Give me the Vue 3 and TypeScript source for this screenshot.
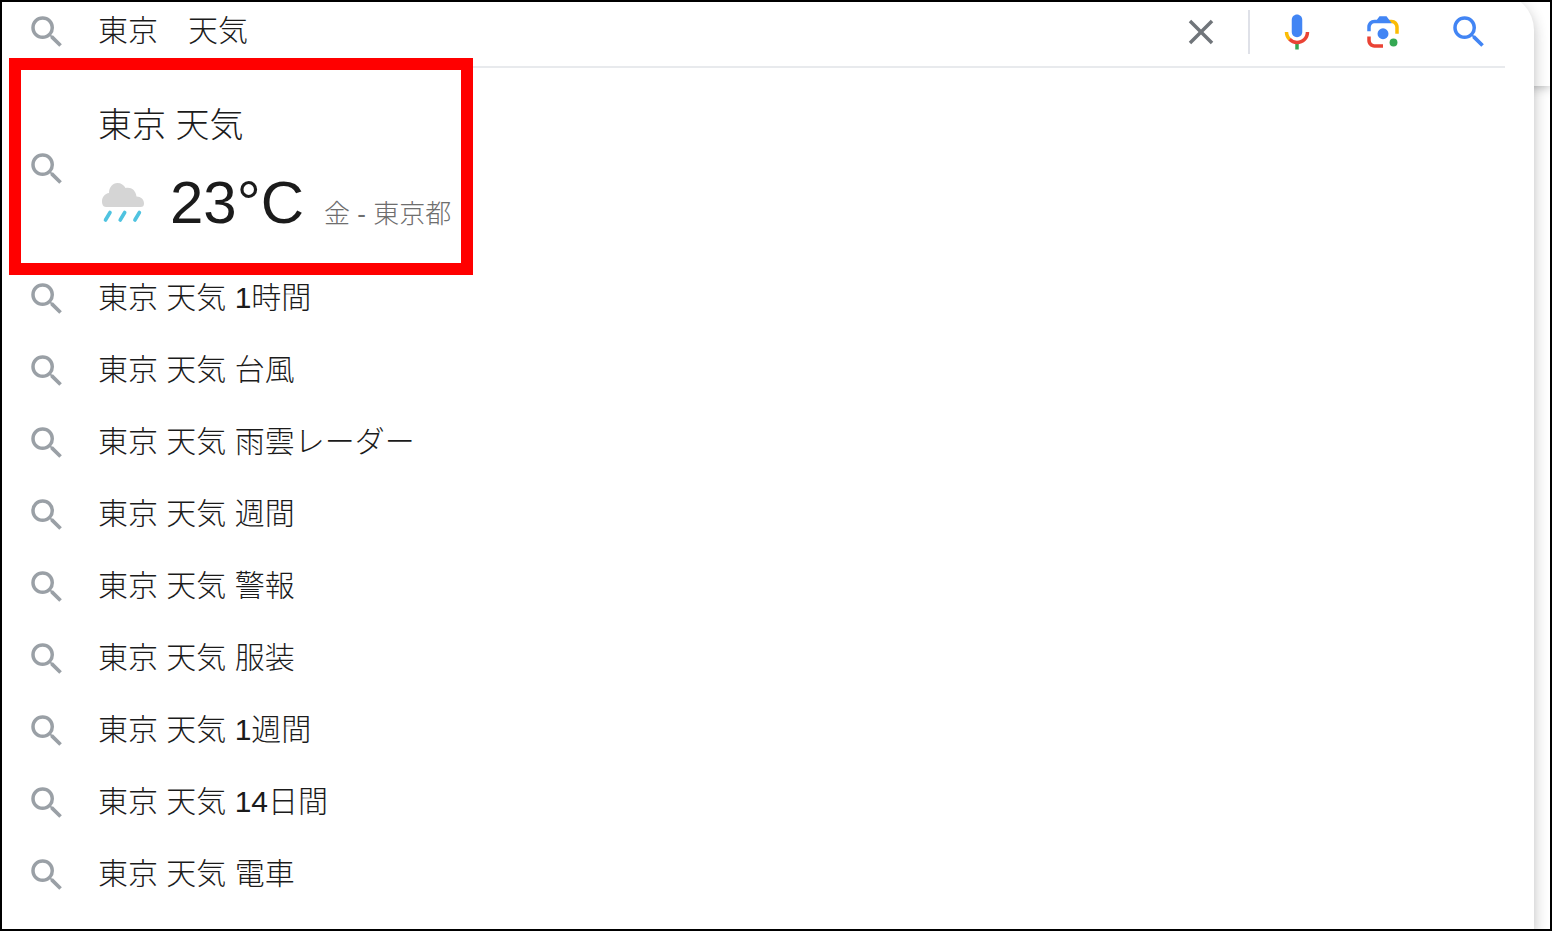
<script setup lang="ts">
import { ref } from 'vue'

const query = ref('東京　天気')

const magnifier =
  'M15.5 14h-.79l-.28-.27A6.471 6.471 0 0 0 16 9.5 6.5 6.5 0 1 0 9.5 16c1.61 0 3.09-.59 4.23-1.57l.27.28v.79l5 4.99L20.49 19l-4.99-5zm-6 0C7.01 14 5 11.99 5 9.5S7.01 5 9.5 5 14 7.01 14 9.5 11.99 14 9.5 14z'

const suggestions: string[] = [
  '東京 天気 1時間',
  '東京 天気 台風',
  '東京 天気 雨雲レーダー',
  '東京 天気 週間',
  '東京 天気 警報',
  '東京 天気 服装',
  '東京 天気 1週間',
  '東京 天気 14日間',
  '東京 天気 電車',
]
</script>

<template>
  <div class="frame">
    <div class="page-header"></div>
    <main class="panel">
      <form class="search-bar" role="search" @submit.prevent>
        <svg class="icon muted" viewBox="0 0 24 24" aria-hidden="true"><path :d="magnifier" /></svg>
        <input v-model="query" class="query" type="text" aria-label="検索" autocomplete="off" />
        <button class="tool clear" type="button" aria-label="クリア" @click="query = ''">
          <svg class="icon close" viewBox="0 0 24 24" aria-hidden="true">
            <path d="M19 6.41L17.59 5 12 10.59 6.41 5 5 6.41 10.59 12 5 17.59 6.41 19 12 13.41 17.59 19 19 17.59 13.41 12z" />
          </svg>
        </button>
        <span class="separator"></span>
        <button class="tool" type="button" aria-label="音声で検索">
          <svg class="icon" viewBox="0 0 24 24" aria-hidden="true">
            <path fill="#4285f4" d="m12 15c1.66 0 3-1.31 3-2.97v-7.02c0-1.66-1.34-3.01-3-3.01s-3 1.34-3 3.01v7.02c0 1.66 1.34 2.97 3 2.97z" />
            <path fill="#34a853" d="m11 18.08h2v3.92h-2z" />
            <path fill="#fbbc04" d="m7.05 16.87c-1.27-1.33-2.05-2.83-2.05-4.87h2c0 1.45 0.56 2.42 1.47 3.38v0.32l-1.15 1.18z" />
            <path fill="#ea4335" d="m12 16.93a4.97 5.25 0 0 1 -3.54 -1.55l-1.41 1.49c1.26 1.34 3.02 2.13 4.95 2.13 3.87 0 6.99-2.92 6.99-7h-1.99c0 2.92-2.24 4.93-5 4.93z" />
          </svg>
        </button>
        <button class="tool" type="button" aria-label="画像で検索">
          <svg class="icon" viewBox="0 0 192 192" aria-hidden="true">
            <circle fill="#34a853" cx="144.07" cy="144" r="18" />
            <circle fill="#4285f4" cx="96.07" cy="104" r="25" />
            <path fill="#ea4335" d="M24 135.2c0 18.11 14.69 32.8 32.8 32.8H96v-16l-40.1-.1c-8.8 0-15.9-8.19-15.9-17.9v-18H24z" />
            <path fill="#fbbc04" d="M168 72.8c0-18.11-14.69-32.8-32.8-32.8H116l20 16c8.8 0 16 8.29 16 18v30h16z" />
            <path fill="#4285f4" d="M112 24H80L68 40H56.8C38.69 40 24 54.69 24 72.8V92h16V74c0-9.71 7.2-18 16-18h80z" />
          </svg>
        </button>
        <button class="tool" type="submit" aria-label="検索を実行">
          <svg class="icon blue" viewBox="0 0 24 24" aria-hidden="true"><path :d="magnifier" /></svg>
        </button>
      </form>

      <ul class="list">
        <li>
          <a class="weather" href="#">
            <svg class="icon muted" viewBox="0 0 24 24" aria-hidden="true"><path :d="magnifier" /></svg>
            <span class="weather-body">
              <span class="weather-title">東京 天気</span>
              <span class="weather-line">
                <svg class="rain" viewBox="0 0 50 44" aria-hidden="true">
                  <path
                    fill="#d5d5d5"
                    d="M8 26C5 26 4 23 4 20.500C4 16 7 12.500 11 12C11 6.500 14.500 2 19.500 2C23 2 26 4 27.500 7C32.500 5.500 38 9 38.500 15.500C43 15.500 46 18.500 46 22.500C46 25 45 26 42.500 26Z"
                  />
                  <path stroke="#4fc3e0" stroke-width="3.600" stroke-linecap="round" d="M12 31.500L7.500 39M26.700 31.500L22.200 39M41.400 31.500L36.900 39" />
                </svg>
                <span class="temperature">23°C</span>
                <span class="place">金 - 東京都</span>
              </span>
            </span>
          </a>
        </li>
        <li v-for="item in suggestions" :key="item">
          <a class="row" href="#">
            <svg class="icon muted" viewBox="0 0 24 24" aria-hidden="true"><path :d="magnifier" /></svg>
            <span class="row-label">{{ item }}</span>
          </a>
        </li>
      </ul>
    </main>
  </div>
</template>

<style>
body {
  margin: 0;
}
</style>

<style scoped>
.frame {
  position: relative;
  display: flex;
  box-sizing: border-box;
  min-height: 100vh;
  overflow: hidden;
  border: 2px solid #000;
  background: #fff;
  color: #1b1b1b;
  font-family: "Liberation Sans", "Noto Sans CJK JP", sans-serif;
  font-size: 30px;
  font-weight: 300;
}

.page-header {
  position: absolute;
  inset: 0 0 auto;
  height: 84px;
  box-shadow: 0 1px 10px rgba(32, 33, 36, 0.35);
}

.panel {
  position: relative;
  flex: 1;
  min-width: 0;
  margin: -8px 16px 0 0;
  border-radius: 0 36px 0 0;
  background: #fff;
  box-shadow: 0 6px 14px rgba(32, 33, 36, 0.3);
}

.search-bar {
  display: flex;
  align-items: center;
  height: 60px;
  margin: 0 29px 0 24px;
  padding: 8px 15px 4px 0;
  border-bottom: 2px solid #e8eaed;
}

.icon {
  display: block;
  flex: none;
  width: 42px;
  height: 42px;
}

.muted {
  fill: #9aa0a6;
}

.blue {
  fill: #4285f4;
}

.close {
  fill: #70757a;
}

.query {
  flex: 1;
  min-width: 0;
  height: 44px;
  margin-left: 30px;
  padding: 0 0 8px;
  border: 0;
  outline: 0;
  background: none;
  color: inherit;
  font: inherit;
}

.tool {
  padding: 0;
  border: 0;
  background: none;
  cursor: pointer;
}

.tool + .tool {
  margin-left: 44px;
}

.separator {
  width: 2px;
  height: 44px;
  margin: 0 26px;
  background: #dfe1e8;
}

.list {
  margin: 0;
  padding: 7px 0 16px;
  list-style: none;
}

.row,
.weather {
  display: flex;
  align-items: center;
  gap: 30px;
  padding-left: 24px;
  color: inherit;
  text-decoration: none;
}

.row {
  height: 72px;
}

.row-label {
  padding-bottom: 8px;
}

.weather {
  position: relative;
  width: fit-content;
  height: 188px;
}

.weather::after {
  content: "";
  position: absolute;
  inset: -17px -22px -12px 7px;
  border: 12px solid #f00;
}

.weather-body {
  display: flex;
  flex-direction: column;
  gap: 12px;
  padding-top: 4px;
}

.weather-title {
  font-size: 34px;
  line-height: 52px;
}

.weather-line {
  display: flex;
  align-items: baseline;
}

.rain {
  align-self: center;
  width: 50px;
  height: 44px;
  fill: none;
}

.temperature {
  margin-left: 22px;
  font-size: 60px;
  line-height: 80px;
}

.place {
  margin-left: 20px;
  color: #6e6e6e;
  font-size: 26px;
}
</style>
